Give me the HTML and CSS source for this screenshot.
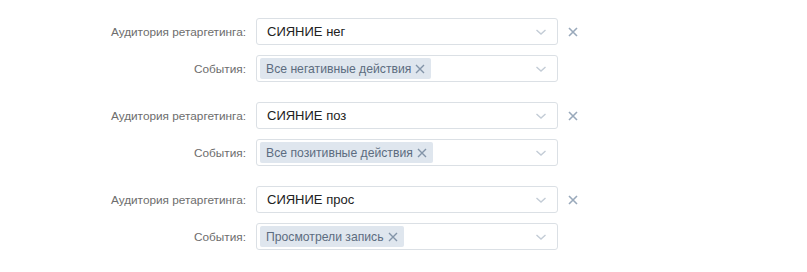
FILE: index.html
```
<!DOCTYPE html>
<html lang="ru">
<head>
  <meta charset="UTF-8" />
  <title>Ретаргетинг</title>
  <link rel="stylesheet" href="styles.css">
</head>
<body>

<div class="audiences">

  <!-- группа 1 -->
  <div class="group">
    <div class="row">
      <div class="label">Аудитория ретаргетинга:</div>
      <div class="select">
        <span class="value">СИЯНИЕ нег</span>
        <svg class="chevron" width="12" height="8" viewBox="0 0 12 8"><path d="M1.5 2l4.5 4 4.5-4" fill="none" stroke="#c3ccd6" stroke-width="1.4"/></svg>
      </div>
      <svg class="remove" width="10" height="10" viewBox="0 0 10 10"><path d="M1 1l8 8M9 1l-8 8" stroke="#99a9bb" stroke-width="1.6"/></svg>
    </div>
    <div class="row">
      <div class="label">События:</div>
      <div class="select multi">
        <span class="tag">Все негативные действия <svg width="10" height="10" viewBox="0 0 10 10"><path d="M1 1l8 8M9 1l-8 8" stroke="#8394a8" stroke-width="1.4"/></svg></span>
        <svg class="chevron" width="12" height="8" viewBox="0 0 12 8"><path d="M1.5 2l4.5 4 4.5-4" fill="none" stroke="#c3ccd6" stroke-width="1.4"/></svg>
      </div>
    </div>
  </div>

  <!-- группа 2 -->
  <div class="group">
    <div class="row">
      <div class="label">Аудитория ретаргетинга:</div>
      <div class="select">
        <span class="value">СИЯНИЕ поз</span>
        <svg class="chevron" width="12" height="8" viewBox="0 0 12 8"><path d="M1.5 2l4.5 4 4.5-4" fill="none" stroke="#c3ccd6" stroke-width="1.4"/></svg>
      </div>
      <svg class="remove" width="10" height="10" viewBox="0 0 10 10"><path d="M1 1l8 8M9 1l-8 8" stroke="#99a9bb" stroke-width="1.6"/></svg>
    </div>
    <div class="row">
      <div class="label">События:</div>
      <div class="select multi">
        <span class="tag">Все позитивные действия <svg width="10" height="10" viewBox="0 0 10 10"><path d="M1 1l8 8M9 1l-8 8" stroke="#8394a8" stroke-width="1.4"/></svg></span>
        <svg class="chevron" width="12" height="8" viewBox="0 0 12 8"><path d="M1.5 2l4.5 4 4.5-4" fill="none" stroke="#c3ccd6" stroke-width="1.4"/></svg>
      </div>
    </div>
  </div>

  <!-- группа 3 -->
  <div class="group">
    <div class="row">
      <div class="label">Аудитория ретаргетинга:</div>
      <div class="select">
        <span class="value">СИЯНИЕ прос</span>
        <svg class="chevron" width="12" height="8" viewBox="0 0 12 8"><path d="M1.5 2l4.5 4 4.5-4" fill="none" stroke="#c3ccd6" stroke-width="1.4"/></svg>
      </div>
      <svg class="remove" width="10" height="10" viewBox="0 0 10 10"><path d="M1 1l8 8M9 1l-8 8" stroke="#99a9bb" stroke-width="1.6"/></svg>
    </div>
    <div class="row">
      <div class="label">События:</div>
      <div class="select multi">
        <span class="tag">Просмотрели запись <svg width="10" height="10" viewBox="0 0 10 10"><path d="M1 1l8 8M9 1l-8 8" stroke="#8394a8" stroke-width="1.4"/></svg></span>
        <svg class="chevron" width="12" height="8" viewBox="0 0 12 8"><path d="M1.5 2l4.5 4 4.5-4" fill="none" stroke="#c3ccd6" stroke-width="1.4"/></svg>
      </div>
    </div>
  </div>

</div>

</body>
</html>
```

FILE: styles.css
```
body {
  margin: 0;
  background: #fff;
  font-family: 'Liberation Sans', Arial, sans-serif;
  color: #000;
}

.audiences {
  padding-top: 18px;
  display: flex;
  flex-direction: column;
  gap: 20px;
}

.group {
  display: flex;
  flex-direction: column;
  gap: 10px;
}

.row {
  display: flex;
  align-items: center;
  height: 27px;
}

.label {
  width: 246px;
  text-align: right;
  font-size: 11.8px;
  color: #6d6d6d;
  margin-right: 10px;
}

.select {
  width: 302px;
  height: 27px;
  box-sizing: border-box;
  border: 1px solid #dbe0e5;
  border-radius: 3px;
  display: flex;
  align-items: center;
  justify-content: space-between;
  padding: 0 10px;
  font-size: 13px;
}

.select.multi {
  padding-left: 3px;
}

.value {
  color: #222;
}

.tag {
  display: flex;
  align-items: center;
  gap: 4px;
  height: 21px;
  padding: 0 6px;
  background: #dfe6ee;
  border-radius: 2px;
  color: #5c6c80;
  font-size: 12.2px;
}

.remove {
  margin-left: 10px;
}
```
